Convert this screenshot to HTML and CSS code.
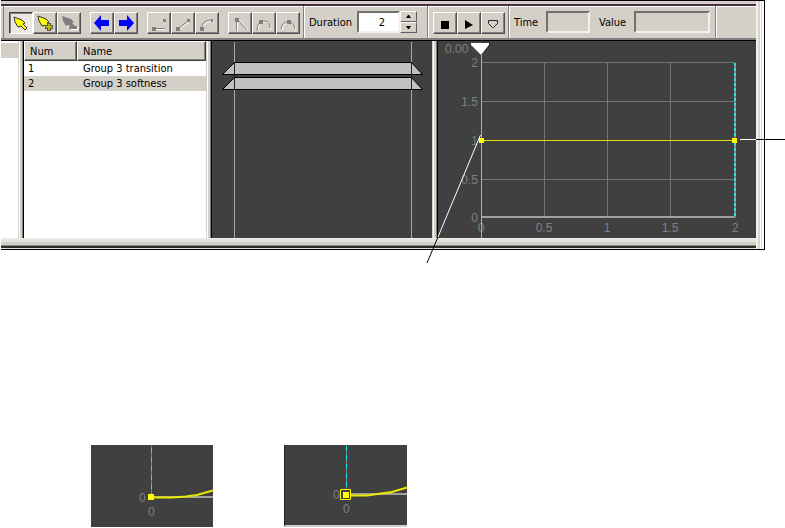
FILE: index.html
```html
<!DOCTYPE html>
<html lang="en">
<head>
    <meta charset="UTF-8">
    <meta name="viewport" content="width=device-width, initial-scale=1.0">
    <title>Curve Editor</title>
    <link rel="stylesheet" href="styles.css">
</head>
<body>
    <div class="figure">
        <div class="window">
            <div class="toolbar">
                <div class="section tools">
                    <div class="group">
                        <button class="tool pressed" aria-label="Select">
                            <svg width="20" height="18"><path d="M3 3l8 3 3 3-2 1 4 4-2 2-4-4-3 1-3-5z" fill="#ff0" stroke="#333"/></svg>
                        </button>
                        <button class="tool" aria-label="Add key">
                            <svg width="20" height="18"><path d="M3 2l8 3 3 3-2 1 2 3-2 1-2-2-3 1-3-5z" fill="#ff0" stroke="#333"/><path d="M12 9h4v2h2v4h-2v2h-4v-2h-2v-4h2z" fill="#554"/><path d="M13 10h2v2h2v2h-2v2h-2v-2h-2v-2h2z" fill="#bb0"/></svg>
                        </button>
                        <button class="tool" aria-label="Remove key">
                            <svg width="20" height="18"><path d="M3 2l9 3 3 3-2 1 3 3-2 2-4-3-3 1-3-5z" fill="#808080"/><path d="M10 12h8v3h-8z" fill="#808080"/><path d="M12 15.500h7v-3M8 12l2 2" fill="none" stroke="#fff"/></svg>
                        </button>
                    </div>
                    <div class="group">
                        <button class="tool" aria-label="Previous key">
                            <svg width="20" height="18"><path d="M2 9l7-8v5h8v6H9v5z" fill="#00f"/></svg>
                        </button>
                        <button class="tool" aria-label="Next key">
                            <svg width="20" height="18"><path d="M18 9l-7-8v5H3v6h8v5z" fill="#00f"/></svg>
                        </button>
                    </div>
                    <div class="group">
                        <button class="tool" aria-label="Step">
                            <svg class="curve" width="20" height="18"><path class="lit" d="M4 15.500h12"/><path d="M5 14.500h11"/><path class="dot" d="M3 13h4v4H3zM14 5h3v3h-3z"/></svg>
                        </button>
                        <button class="tool" aria-label="Linear">
                            <svg class="curve" width="20" height="18"><path class="lit" d="M5 16L17 7"/><path d="M5 15L16 6"/><path class="dot" d="M3 13h4v4H3zM14 5h3v3h-3z"/></svg>
                        </button>
                        <button class="tool" aria-label="Smooth">
                            <svg class="curve" width="20" height="18"><path class="lit" d="M6 15C6 9 10 7 17 7"/><path d="M5 14C5 8 9 6 16 6"/><path class="dot" d="M3 13h4v4H3zM14 5h2v3h-2z"/></svg>
                        </button>
                    </div>
                    <div class="group">
                        <button class="tool" aria-label="Corner">
                            <svg class="curve" width="20" height="18"><path class="lit" d="M7.500 5v12M8 5l10 11"/><path d="M6.500 5v12M7 5l10 11"/><path class="dot" d="M5 4h4v4H5z"/></svg>
                        </button>
                        <button class="tool" aria-label="Tangent">
                            <svg class="curve" width="20" height="18"><path class="lit" d="M4 17C4 9 8 8 12 8q5 1 5 7"/><path d="M3 17C3 8 7 7 11 7q5 1 5 7"/><path class="dot" d="M5 6h4v4H5z"/></svg>
                        </button>
                        <button class="tool" aria-label="Auto tangent">
                            <svg class="curve" width="20" height="18"><path class="lit" d="M4 16Q5 9 11 9t7 7"/><path d="M3 15Q4 8 10 8t7 7"/><path class="dot" d="M9 6h4v4H9z"/></svg>
                        </button>
                    </div>
                </div>
                <div class="section duration">
                    <label for="duration">Duration</label>
                    <input class="number" id="duration" type="text" value="2">
                    <div class="spinner">
                        <button aria-label="Increase"><svg width="5" height="3"><path d="M0 3l2-3h1l2 3z"/></svg></button>
                        <button aria-label="Decrease"><svg width="5" height="3"><path d="M0 0l2 3h1l2-3z"/></svg></button>
                    </div>
                </div>
                <div class="section playback">
                    <div class="group">
                        <button class="tool" aria-label="Stop">
                            <svg width="20" height="18"><path d="M6 7h8v8H6z"/></svg>
                        </button>
                        <button class="tool" aria-label="Play">
                            <svg width="20" height="18"><path d="M6 6l8 5-8 4z"/></svg>
                        </button>
                        <button class="tool" aria-label="Marker">
                            <svg width="20" height="18"><path d="M5.500 6.500h9v3l-4 4h-1l-4-4z" fill="none" stroke="#222"/></svg>
                        </button>
                    </div>
                </div>
                <div class="section readout">
                    <label for="time">Time</label>
                    <input class="time" id="time" type="text" readonly>
                    <label for="value">Value</label>
                    <input class="value" id="value" type="text" readonly>
                </div>
            </div>

            <div class="panes">
                <div class="pane side"><div class="side-row"></div></div>
                <div class="splitter"></div>
                <div class="pane list">
                    <table>
                        <thead>
                            <tr><th class="num">Num</th><th>Name</th></tr>
                        </thead>
                        <tbody>
                            <tr><td>1</td><td>Group 3 transition</td></tr>
                            <tr class="selected"><td>2</td><td>Group 3 softness</td></tr>
                        </tbody>
                    </table>
                </div>
                <div class="splitter"></div>
                <div class="pane timeline">
                    <svg width="219" height="197">
                        <path d="M22.500 1v196M199.500 1v196" stroke="#a8a8a8"/>
                        <path class="bar" d="M10.500 33.500L22.500 21.500H199.500L210.500 33.500z"/>
                        <path class="bar" d="M10.500 48.500L22.500 36.500H199.500L210.500 48.500z"/>
                        <path d="M22.500 22v27M199.500 22v27" stroke="#222"/>
                    </svg>
                </div>
                <div class="splitter"></div>
                <div class="pane graph">
                    <svg width="318" height="197">
                        <path class="grid" d="M43 21.500H297M43 60.500H297M43 99.500H297M43 138.500H297M106.500 21V176M169.500 21V176M232.500 21V176M296.500 21V176"/>
                        <path d="M43 176H297" stroke="#a0a0a0" stroke-width="2"/>
                        <text x="7" y="12">0.00</text>
                        <g text-anchor="end">
                            <text x="40" y="26">2</text>
                            <text x="40" y="65">1.5</text>
                            <text x="40" y="104">1</text>
                            <text x="40" y="143">0.5</text>
                            <text x="40" y="181">0</text>
                        </g>
                        <g text-anchor="middle">
                            <text x="43" y="191">0</text>
                            <text x="106" y="191">0.5</text>
                            <text x="169" y="191">1</text>
                            <text x="232" y="191">1.5</text>
                            <text x="297" y="191">2</text>
                        </g>
                        <path d="M43.500 14V197" stroke="#32e1e6"/>
                        <path d="M297 22V177" stroke="#808080" stroke-width="2"/>
                        <path d="M297 22V177" stroke="#32e1e6" stroke-width="2" stroke-dasharray="3 2"/>
                        <path d="M43 99.500H297" stroke="#e0e000"/>
                        <path class="key" d="M41 97h5v5h-5zM294 97h5v5h-5z"/>
                        <path d="M37 5l15-3v3l-9 9-8-8z" fill="#181818"/>
                        <path d="M33 2h18v2l-8 10L33 4z" fill="#fff"/>
                    </svg>
                </div>
            </div>
        </div>
        <svg class="callout" width="785" height="270">
            <path d="M480.500 135L438 237" stroke="#fff"/>
            <path d="M438 237L427 263" stroke="#000"/>
            <path d="M740 139.500H756" stroke="#fff"/>
            <path d="M756 139.500H785" stroke="#000"/>
        </svg>
    </div>

    <div class="details">
        <svg class="detail" width="122" height="82">
            <path d="M60.500 0V52" stroke="#808080"/>
            <path d="M60.500 3V52" stroke="#10e8f0" stroke-dasharray="5 4"/>
            <path d="M60 52H122" stroke="#a0a0a0" stroke-width="2"/>
            <text x="48" y="57">0</text>
            <text x="57" y="71">0</text>
            <path class="ease" d="M60 52.500H81L95 51.500L106 50L122 45.500"/>
            <path class="key" d="M57 49h6v6h-6z"/>
        </svg>
        <svg class="detail framed" width="122" height="80">
            <path d="M61.500 0V50" stroke="#808080"/>
            <path d="M61.500 1V50" stroke="#10e8f0" stroke-dasharray="5 4"/>
            <path d="M61 49H122" stroke="#a0a0a0" stroke-width="2"/>
            <text x="48" y="54">0</text>
            <text x="58" y="68">0</text>
            <path class="ease" d="M61 50.500H82L96 48.500L107 47L122 42.500"/>
            <path d="M55.500 44.500h10v10h-10z" fill="#404040" stroke="#ff0"/>
            <path class="key" d="M58 47h6v6h-6z"/>
        </svg>
    </div>
</body>
</html>
```

FILE: styles.css
```css
* {
    margin: 0;
    padding: 0;
    box-sizing: border-box;
}

body {
    background: #fff;
    color: #000;
    font: 11px/15px "DejaVu Sans Condensed", "DejaVu Sans", sans-serif;
}

.figure {
    position: relative;
}

.window {
    margin: 0 20px 0 1px;
    border: solid #000;
    border-width: 1px 1px 1px 0;
    padding: 3px 8px 11px 0;
    background:
        linear-gradient(to right, #f4f1ec 2px, #d8d3cc 2px 4px, #fff 4px 5px, #dcd7d0 5px 6px, #fff 6px) right top / 8px 100% no-repeat,
        linear-gradient(#f0efea 1px, #e6e4de 1px 4px, #d4d0c8 4px 7px, #8b8d85 7px 8px, #2c302c 8px 10px, #e4e2d8 10px) left bottom / 100% 11px no-repeat,
        #d8cace;
}

.toolbar {
    display: flex;
    height: 37px;
    border-top: 2px solid #40343c;
    border-bottom: 1px solid #000;
    background: #d4d0c8;
    box-shadow: inset 0 1px #fff, inset 0 -2px #808080;
}

.section {
    display: flex;
    align-items: center;
    height: 32px;
    border-right: 1px solid #808080;
    box-shadow: 1px 0 #fff;
}

.tools {
    gap: 9px;
    margin-left: 2px;
    padding: 2px 3px 0 5px;
    border-left: 1px solid #808080;
}

.group {
    display: flex;
}

.tool {
    display: flex;
    align-items: center;
    justify-content: center;
    width: 24px;
    height: 22px;
    border: 1px solid;
    border-color: #fff #505050 #505050 #fff;
    background: #d4d0c8;
    box-shadow: inset -1px -1px #808080;
}

.tool svg {
    flex: none;
}

.tool.pressed {
    border-color: #404040 #fff #fff #404040;
    background: #ebe8e3;
    box-shadow: inset 1px 1px #808080;
}

.curve path {
    fill: none;
    stroke: #808080;
}

.curve .lit {
    stroke: #fff;
}

.curve .dot {
    fill: #808080;
    stroke: none;
}

.duration {
    padding: 0 10px 0 5px;
}

.duration label {
    width: 48px;
}

input {
    height: 22px;
    border: 2px solid;
    border-color: #707070 #f4f2ee #f4f2ee #707070;
    background: #d4d0c8;
    font: inherit;
}

.number {
    width: 43px;
    padding-left: 7px;
    background: #fff;
    text-align: center;
}

.spinner button {
    display: flex;
    align-items: center;
    justify-content: center;
    width: 17px;
    height: 11px;
    border: 1px solid;
    border-color: #fff #606060 #606060 #fff;
    background: #d4d0c8;
}

.playback {
    padding: 2px 3px 0 5px;
}

.readout {
    padding: 0 5px;
}

.readout label {
    width: 32px;
}

.time {
    width: 44px;
    margin-right: 9px;
}

.readout .time + label {
    width: 35px;
}

.value {
    width: 76px;
}

.panes {
    display: flex;
    background: #fff;
}

.pane {
    min-height: 197px;
    overflow: hidden;
}

.side {
    width: 17px;
    padding-top: 2px;
}

.side-row {
    height: 15px;
    background: #d4d0c8;
}

.splitter {
    flex: none;
    width: 6px;
    border-right: 1px solid #000;
    background: linear-gradient(to right, #d4d0c8 1px, #fff 1px 2px, #d4d0c8 2px 4px, #808080 4px);
}

.list {
    width: 182px;
}

table {
    width: 100%;
    table-layout: fixed;
    border-collapse: separate;
    border-spacing: 0;
}

th,
td {
    height: 15px;
    padding: 0 5px;
    font-weight: normal;
    text-align: left;
    white-space: nowrap;
}

th {
    height: 20px;
    border: 1px solid;
    border-color: #fff #404040 #404040 #fff;
    background: #d4d0c8;
    box-shadow: inset -1px -1px #808080;
}

.num {
    width: 53px;
}

td:first-child {
    padding-left: 4px;
}

td:last-child {
    padding-left: 6px;
}

.selected {
    background: #d4d0c8;
}

.timeline,
.graph {
    background: #404040;
}

.timeline {
    width: 220px;
}

.graph {
    flex: 1;
}

.pane svg,
.detail {
    display: block;
}

.bar {
    fill: #c0c0c0;
    stroke: #000;
}

.grid {
    stroke: #747474;
}

svg text {
    fill: #808080;
    font: 12px "Liberation Sans", sans-serif;
}

.key {
    fill: #ff0;
}

.ease {
    fill: none;
    stroke: #e8e800;
    stroke-width: 2;
}

/* leader lines drawn over the window */
.callout {
    position: absolute;
    top: 0;
    left: 0;
    pointer-events: none;
}

.details {
    display: flex;
    align-items: flex-start;
    gap: 71px;
    padding: 195px 0 0 91px;
}

.detail {
    background: #404040;
}

.framed {
    box-sizing: content-box;
    border-left: 1px solid #202020;
    border-bottom: 2px solid #d4d0c8;
}
```
